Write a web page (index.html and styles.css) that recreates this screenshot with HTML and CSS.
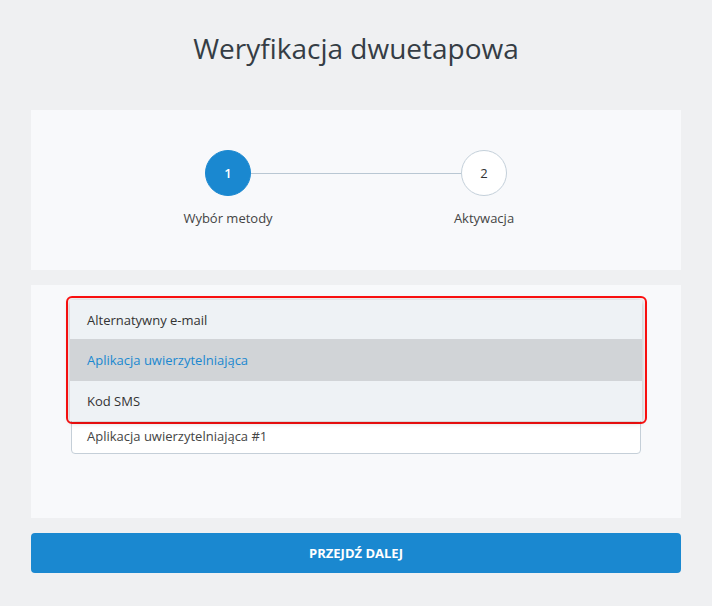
FILE: index.html
```html
<!DOCTYPE html>
<html lang="pl">
<head>
<meta charset="utf-8">
<title>Weryfikacja dwuetapowa</title>
<link rel="stylesheet" href="styles.css">
</head>
<body>
<main class="page">
  <h1 class="title">Weryfikacja dwuetapowa</h1>

  <section class="card steps-card">
    <div class="steps">
      <div class="step active">
        <div class="circle">1</div>
        <div class="label">Wybór metody</div>
      </div>
      <div class="connector"></div>
      <div class="step">
        <div class="circle">2</div>
        <div class="label">Aktywacja</div>
      </div>
    </div>
  </section>

  <section class="card form-card">
    <div class="select">Aplikacja uwierzytelniająca #1</div>
    <div class="dropdown">
      <ul class="options">
        <li class="option">Alternatywny e-mail</li>
        <li class="option selected">Aplikacja uwierzytelniająca</li>
        <li class="option">Kod SMS</li>
      </ul>
    </div>
  </section>

  <button class="btn" type="button">PRZEJDŹ DALEJ</button>
</main>
</body>
</html>
```

FILE: styles.css
```css
* { box-sizing: border-box; }

body {
  margin: 0;
  background: #eff0f2;
  font-family: "Open Sans", "Noto Sans", sans-serif;
  color: #3a3f45;
}

.page {
  width: 650px;
  margin: 0 auto;
  display: flex;
  flex-direction: column;
}

.title {
  margin: 0;
  height: 110px;
  display: flex;
  align-items: center;
  justify-content: center;
  padding-bottom: 14px;
  font-size: 28px;
  font-weight: 400;
  color: #353d45;
}

.card {
  background: #f8f9fb;
}

.steps-card {
  height: 160px;
  padding-top: 40px;
}

.steps {
  display: flex;
  justify-content: center;
  align-items: flex-start;
}

.step {
  width: 160px;
  display: flex;
  flex-direction: column;
  align-items: center;
  position: relative;
  z-index: 1;
}

.circle {
  width: 46px;
  height: 46px;
  border-radius: 50%;
  border: 1px solid #c4d0da;
  background: #fff;
  display: flex;
  align-items: center;
  justify-content: center;
  font-size: 13px;
  color: #333;
}

.step.active .circle {
  background: #1a88d0;
  border-color: #1a88d0;
  color: #fff;
  font-weight: 600;
}

.label {
  margin-top: 13px;
  font-size: 13px;
  color: #444;
  white-space: nowrap;
}

.connector {
  flex: none;
  width: 210px;
  margin: 22.5px -57px 0;
  height: 1px;
  background: #b9c7d3;
}

.form-card {
  position: relative;
  margin-top: 15px;
  height: 233px;
  padding: 132px 40px 0;
}

.select {
  height: 37px;
  border: 1px solid #c5cfd8;
  border-radius: 4px;
  background: #fff;
  padding-left: 15px;
  display: flex;
  align-items: center;
  font-size: 13px;
  color: #444;
}

.dropdown {
  position: absolute;
  left: 35px;
  top: 11px;
  width: 581px;
  height: 128px;
  border: 2px solid #ff1010;
  border-radius: 6px;
  padding: 2px 3px 2px 2px;
}

.options {
  list-style: none;
  margin: 0;
  padding: 0;
  height: 121px;
  background: #eef2f5;
  box-shadow: 0 1px 6px rgba(0, 0, 0, 0.28);
  display: flex;
  flex-direction: column;
}

.option {
  height: 40px;
  padding-left: 17px;
  display: flex;
  align-items: center;
  font-size: 13px;
  color: #333;
}

.option:first-child { height: 39px; }

.option.selected {
  height: 42px;
  background: #d1d4d7;
  color: #1a88d0;
}

.btn {
  margin-top: 15px;
  height: 40px;
  border: 0;
  border-radius: 4px;
  background: #1a88d0;
  color: #fff;
  font-family: "Open Sans", "Noto Sans", sans-serif;
  font-weight: 700;
  font-size: 13px;
}
```
